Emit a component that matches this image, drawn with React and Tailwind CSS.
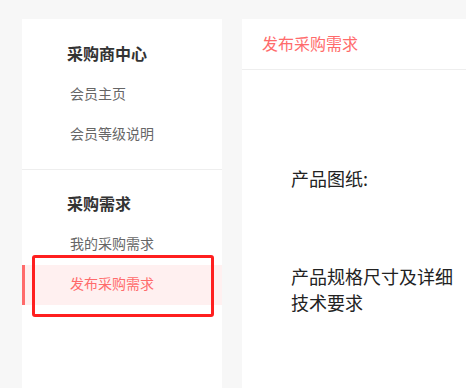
import React from "react";

const font = { fontFamily: '"Noto Sans CJK SC", "Noto Sans", sans-serif' };

const SideItem = ({ label, active }) => {
  if (active) {
    return (
      <div className="relative flex h-[40px] items-center bg-[#fff0f0] pb-[3px] pl-[48px] text-[14px] text-[#ff6b6b]">
        <span className="absolute left-0 top-0 h-full w-[3px] bg-[#ff6b6b]" />
        {label}
        <span className="absolute left-[10px] right-[8px] top-[-10px] bottom-[-12px] rounded-[3px] border-[3px] border-[#ff1f1f]" />
      </div>
    );
  }
  return (
    <div className="flex h-[40px] items-center pb-[3px] pl-[48px] text-[14px] text-[#666]">{label}</div>
  );
};

const App = () => {
  return (
    <div
      className="flex h-[388px] w-[466px] gap-[20px] overflow-hidden bg-[#f7f7f7] pl-[22px] pt-[19px]"
      style={font}
    >
      <div className="w-[200px] shrink-0 bg-white">
        <div className="pb-[14px] pt-[22px]">
          <div className="h-[24px] pl-[45px] text-[16px] font-bold leading-[24px] text-[#333]">采购商中心</div>
          <div className="mt-[10px]">
            <SideItem label="会员主页" />
            <SideItem label="会员等级说明" />
          </div>
        </div>
        <div className="border-t border-[#eeeeee] pt-[21px]">
          <div className="h-[24px] pl-[45px] text-[16px] font-bold leading-[24px] text-[#333]">采购需求</div>
          <div className="mt-[10px]">
            <SideItem label="我的采购需求" />
            <SideItem label="发布采购需求" active />
          </div>
        </div>
      </div>

      <div className="flex-1 bg-white">
        <div className="flex h-[51px] items-center border-b border-[#eeeeee] pb-[3px] pl-[20px] text-[16px] text-[#ff6b6b]">
          发布采购需求
        </div>
        <div className="pl-[49px] pt-[95px] text-[18px] leading-[26px] text-[#222]">
          <div>产品图纸:</div>
          <div className="mt-[72px] w-[170px]">产品规格尺寸及详细技术要求</div>
        </div>
      </div>
    </div>
  );
};

export default App;
